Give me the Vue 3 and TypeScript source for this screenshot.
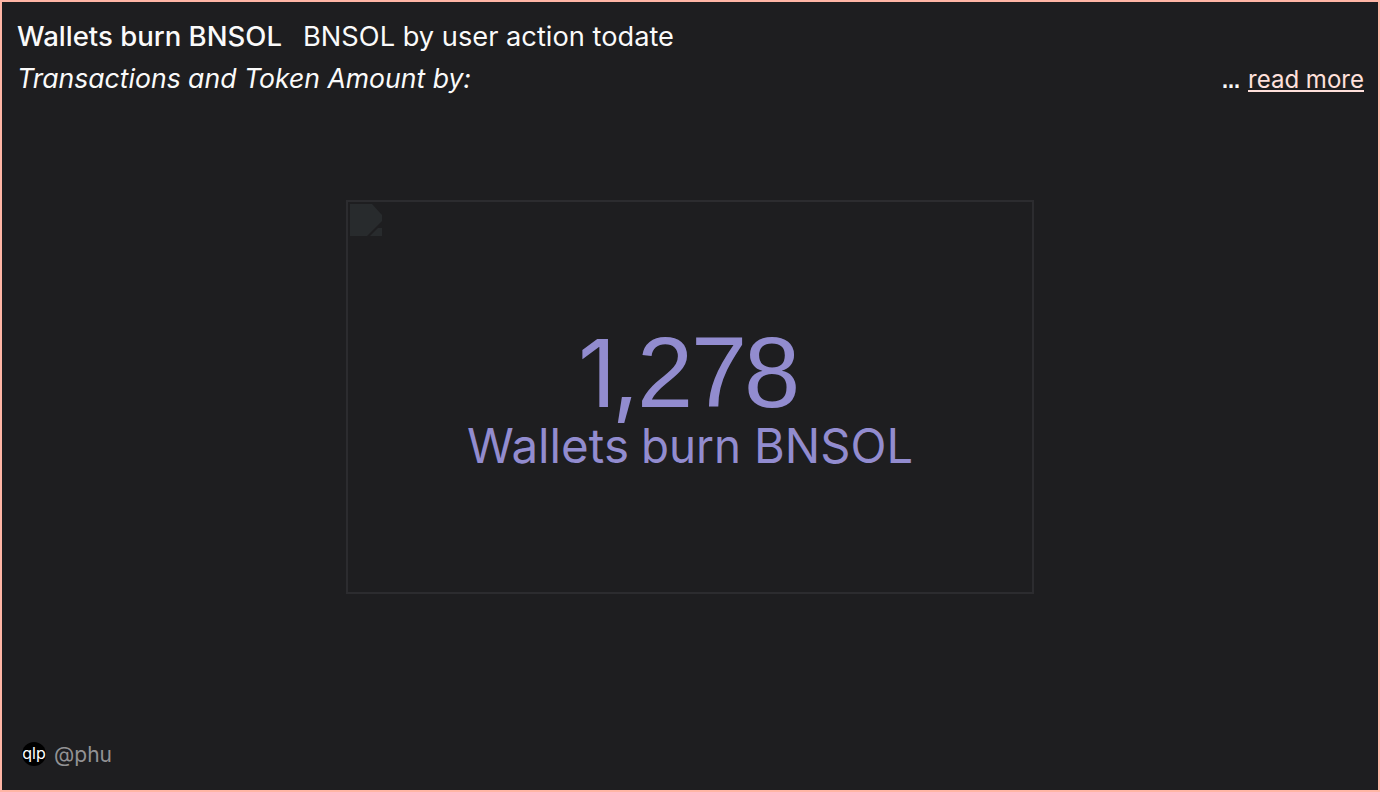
<script setup lang="ts">
const title = 'Wallets burn BNSOL'
const subtitle = 'BNSOL by user action todate'
const value: number = 1278
const positions = [118, 152, 177, 231, 284]
const digits = value.toLocaleString('en-US').split('').map((char, i) => ({ char, x: positions[i] }))
const words = [
  { text: 'Wallets', x: 7, width: 162 },
  { text: 'burn', x: 181, width: 100 },
  { text: 'BNSOL', x: 294, width: 159 },
]
</script>

<template>
  <main class="card">
    <header>
      <div class="heading">
        <svg class="title" width="266" height="34"><text x="0" y="26" textLength="265" lengthAdjust="spacingAndGlyphs">{{ title }}</text></svg>
        <svg class="subtitle" width="374" height="34"><text x="0" y="26" textLength="371" lengthAdjust="spacingAndGlyphs">{{ subtitle }}</text></svg>
      </div>
      <div class="description">
        <svg class="desc" width="460" height="36"><text x="0" y="26" textLength="454" lengthAdjust="spacingAndGlyphs">Transactions and Token Amount by:</text></svg>
        <span class="more"><svg class="dots" width="17" height="36"><text x="-1" y="26" textLength="18" lengthAdjust="spacingAndGlyphs">...</text></svg><a><svg width="116" height="30"><text x="0" y="26" textLength="116" lengthAdjust="spacingAndGlyphs">read more</text></svg></a></span>
      </div>
    </header>
    <section class="body">
      <div class="frame">
        <svg class="broken" width="32" height="32" viewBox="0 0 32 32">
          <path d="M0 0H22L32 11V17L17 32H0Z" fill="#282b2d" />
          <path d="M28 24H32V32H20Z" fill="#282b2d" />
        </svg>
        <div class="counter">
          <svg class="value" width="460" height="106"><text><tspan v-for="(d, i) in digits" :key="i" :x="d.x" y="87" :class="{ narrow: i < 2 }">{{ d.char }}</tspan></text></svg>
          <svg class="label" width="460" height="54"><text v-for="w in words" :key="w.text" :x="w.x" y="37" :textLength="w.width" lengthAdjust="spacingAndGlyphs">{{ w.text }}</text></svg>
        </div>
      </div>
    </section>
    <footer><span class="avatar">qlp</span><span class="user">@phu</span></footer>
  </main>
</template>

<style>
body { background: #1e1e20; }
</style>
<style scoped>
.card { box-sizing: border-box; width: 1380px; height: 792px; border: 2px solid #ffb5a5; background: #1e1e20; color: #fafafa; font-family: Inter, sans-serif; display: flex; flex-direction: column; }
svg { display: block; overflow: visible; fill: currentColor; }
header { padding: 18px 14px 0 15px; height: 180px; box-sizing: border-box; }
.heading { display: flex; gap: 20px; font-size: 26.5px; }
.title { font-weight: 550; }
.description { display: flex; justify-content: space-between; margin-top: 8px; }
.desc { font-size: 26.5px; font-style: italic; }
.more { display: flex; align-items: flex-start; gap: 8px; font-size: 24.5px; }
.dots { font-family: "Liberation Sans", sans-serif; font-weight: bold; font-size: 24px; }
.more a { height: 28px; color: #ffe0db; border-bottom: 2px solid #ffe0db; }
.body { height: 430px; padding-top: 18px; box-sizing: border-box; }
.frame { box-sizing: border-box; width: 688px; height: 394px; margin: 0 auto; border: 2px solid #2c2c2f; padding: 2px; }
.counter { width: 460px; margin: 84px auto 0; color: #928ccf; }
.value { font-family: "Liberation Sans", sans-serif; font-size: 101px; }
.narrow { font-family: Inter, sans-serif; font-size: 94px; }
.label { font-size: 47.5px; }
footer { margin-top: auto; padding: 0 20px 22px; display: flex; align-items: center; gap: 8px; color: #929294; font-size: 21px; line-height: 26px; }
.avatar { width: 24px; height: 24px; margin-top: -2px; border-radius: 50%; background: #000; color: #fff; font-size: 16px; line-height: 23px; display: flex; justify-content: center; }
</style>
